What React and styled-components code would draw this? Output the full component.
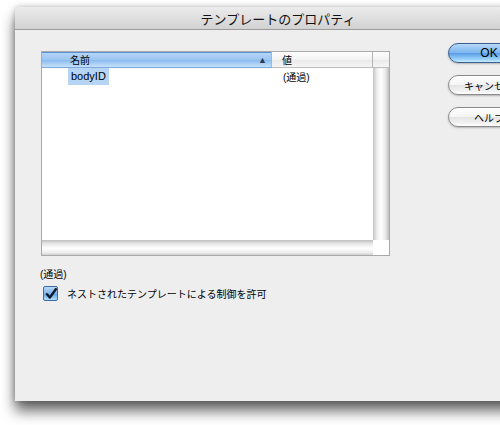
import React from "react";
import styled, { createGlobalStyle } from "styled-components";

const Global = createGlobalStyle`
  html, body {
    margin: 0;
    padding: 0;
    background: #ffffff;
    overflow: hidden;
    width: 500px;
    height: 425px;
  }
  body {
    font-family: "Liberation Sans", "Noto Sans CJK JP", sans-serif;
    color: #000;
  }
`;

const Stage = styled.div`
  padding: 7px 0 0 15px;
  width: 600px;
`;

const Window = styled.div`
  width: 526px;
  height: 394px;
  background: #eeeeee;
  border-radius: 5px 5px 0 0;
  box-shadow: 0 10px 14px rgba(0, 0, 0, 0.6), 0 0 6px rgba(0, 0, 0, 0.25);
  display: flex;
  flex-direction: column;
`;

const TitleBar = styled.div`
  height: 22px;
  border-radius: 5px 5px 0 0;
  background: linear-gradient(#ececec, #dcdcdc 60%, #d2d2d2);
  border-bottom: 1px solid #9c9c9c;
  display: flex;
  align-items: center;
  justify-content: center;
  font-size: 13px;
  color: #111;
`;

const Body = styled.div`
  display: flex;
  padding: 12px 0 0 26px;
`;

const LeftCol = styled.div`
  width: 349px;
  padding-top: 9px;
`;

const Table = styled.div`
  width: 347px;
  height: 203px;
  border: 1px solid #a9a9a9;
  background: #fff;
  display: grid;
  grid-template-columns: 230px 101px 16px;
  grid-template-rows: 16px 172px 15px;
`;

const HeadCell = styled.div`
  display: flex;
  align-items: center;
  font-size: 10px;
  box-sizing: border-box;
  padding-left: ${(p) => p.$pad || 0}px;
  border-right: ${(p) => (p.$last ? "none" : "1px solid #b4b4b4")};
  background: ${(p) =>
    p.$active
      ? "linear-gradient(#5c8fd6 0, #5c8fd6 1px, #b4d4f6 1px, #9cc6f1 50%, #86b8ee 51%, #c6e2fb 100%)"
      : "linear-gradient(#ffffff, #f2f2f2 50%, #e9e9e9 51%, #f6f6f6)"};
  border-bottom: 1px solid ${(p) => (p.$active ? "#7fa9dc" : "#bdbdbd")};
`;

const SortArrow = styled.span`
  margin-left: auto;
  margin-right: 4px;
  font-size: 9px;
  color: #2c3c54;
`;

const Rows = styled.div`
  grid-column: 1 / 3;
  display: grid;
  grid-template-columns: 230px 101px;
  align-content: start;
`;

const Cell = styled.div`
  height: 17px;
  display: flex;
  align-items: center;
  padding-left: ${(p) => p.$pad || 0}px;
  font-size: ${(p) => p.$size || 11}px;
`;

const Selected = styled.span`
  background: #b6d4f4;
  padding: 2px 3px;
  line-height: 13px;
`;

const VScroll = styled.div`
  background: linear-gradient(to right, #c4c4c4, #eeeeee 25%, #ffffff 50%, #e6e6e6 80%, #bdbdbd);
`;

const HScroll = styled.div`
  grid-column: 1 / 3;
  background: linear-gradient(#bfbfbf, #e8e8e8 25%, #ffffff 55%, #ececec 85%, #cfcfcf);
`;

const Corner = styled.div`
  background: #ffffff;
`;

const Label = styled.div`
  margin-top: 12px;
  margin-left: -1px;
  font-size: 10px;
  height: 14px;
  line-height: 14px;
`;

const CheckRow = styled.label`
  display: flex;
  align-items: center;
  gap: 9px;
  margin-top: 4px;
  margin-left: 2px;
  font-size: 10px;
`;

const CheckBox = styled.span`
  width: 13px;
  height: 13px;
  border: 1px solid #3b6aa8;
  border-radius: 2px;
  background: linear-gradient(#b9d8f6, #7fb3ea 50%, #5e9fe4 51%, #b6e0fb);
  display: flex;
  align-items: center;
  justify-content: center;
`;

const RightCol = styled.div`
  margin-left: 58px;
  margin-top: 1px;
  display: flex;
  flex-direction: column;
  gap: 12px;
`;

const Button = styled.div`
  width: 82px;
  height: 20px;
  box-sizing: border-box;
  border-radius: 11px;
  display: flex;
  align-items: center;
  justify-content: center;
  font-size: ${(p) => (p.$primary ? 12 : 10)}px;
  border: 1px solid ${(p) => (p.$primary ? "#3b5f91" : "#8a8a8a")};
  background: ${(p) =>
    p.$primary
      ? "linear-gradient(#b8d8f7, #7db6ee 48%, #5a9fe6 52%, #9ad2fb 85%, #c8ecff)"
      : "linear-gradient(#ffffff, #f4f4f4 48%, #e4e4e4 52%, #f3f3f3 85%, #ffffff)"};
  box-shadow: 0 1px 2px rgba(0, 0, 0, 0.25);
`;

export default function App() {
  return (
    <>
      <Global />
      <Stage>
        <Window>
          <TitleBar>テンプレートのプロパティ</TitleBar>
          <Body>
            <LeftCol>
              <Table>
                <HeadCell $active $pad={28}>
                  名前
                  <SortArrow>▲</SortArrow>
                </HeadCell>
                <HeadCell $pad={10}>値</HeadCell>
                <HeadCell $last />
                <Rows>
                  <Cell $pad={26}>
                    <Selected>bodyID</Selected>
                  </Cell>
                  <Cell $pad={11} $size={10}>
                    (通過)
                  </Cell>
                </Rows>
                <VScroll />
                <HScroll />
                <Corner />
              </Table>
              <Label>(通過)</Label>
              <CheckRow>
                <CheckBox>
                  <svg width="12" height="12" viewBox="0 0 12 12">
                    <path
                      d="M2 6.2 L4.8 9.6 L10.8 1.2"
                      fill="none"
                      stroke="#0c1a2e"
                      strokeWidth="2.4"
                      strokeLinecap="round"
                      strokeLinejoin="round"
                    />
                  </svg>
                </CheckBox>
                ネストされたテンプレートによる制御を許可
              </CheckRow>
            </LeftCol>
            <RightCol>
              <Button $primary>OK</Button>
              <Button>キャンセル</Button>
              <Button>ヘルプ</Button>
            </RightCol>
          </Body>
        </Window>
      </Stage>
    </>
  );
}
